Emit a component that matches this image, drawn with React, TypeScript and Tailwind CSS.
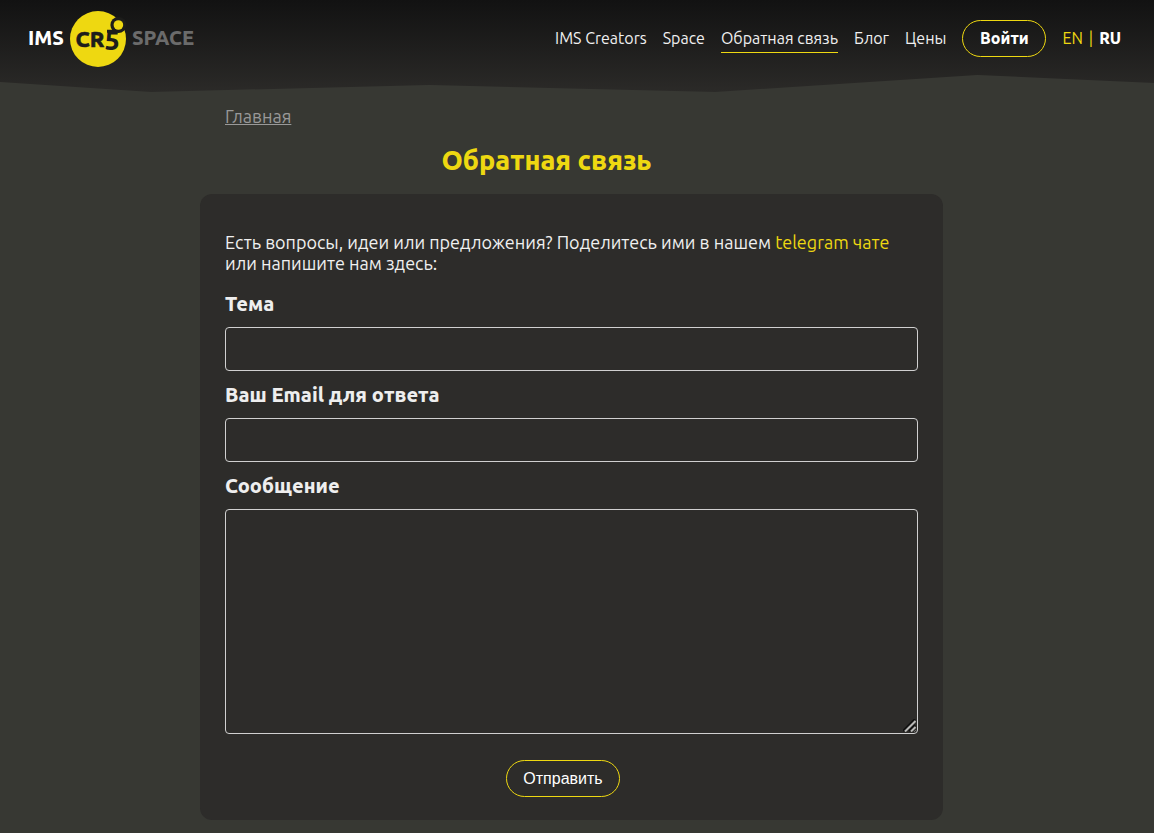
import { FC, FormEvent, useState } from 'react';

interface NavItem {
  title: string;
  href: string;
  active?: boolean;
}

const navItems: NavItem[] = [
  { title: 'IMS Creators', href: '#creators' },
  { title: 'Space', href: '#space' },
  { title: 'Обратная связь', href: '#feedback', active: true },
  { title: 'Блог', href: '#blog' },
  { title: 'Цены', href: '#prices' },
];

const Logo: FC = () => (
  <a href="#home" className="flex items-center gap-[6px] text-xl font-extrabold leading-6">
    <span className="pb-0.5 text-white">IMS</span>
    <svg width="56" height="56" viewBox="0 0 56 56" aria-label="CR5">
      <circle cx="28" cy="28" r="28" fill="#eed811" />
      <circle cx="48.4" cy="14" r="8" fill="#1d1d1b" />
      <circle cx="48.4" cy="14" r="4.8" fill="#eed811" />
      <path d="M37 20.3h5.5l2.5-2" stroke="#1d1d1b" strokeWidth="3" fill="none" />
      <text x="5.5" y="36" fontSize="22" fill="#1d1d1b" stroke="#1d1d1b" strokeWidth="0.5">CR</text>
      <text x="34.5" y="38.5" fontSize="27" fill="#1d1d1b">5</text>
    </svg>
    <span className="pb-0.5 text-[#6b6b6b]">SPACE</span>
  </a>
);

const Header: FC = () => (
  <header className="h-[92px] bg-linear-to-b from-[#121212] to-[#2b2a28] [clip-path:polygon(0_0,100%_0,100%_83px,84.7%_75px,62%_92px,37.2%_85px,13.1%_92px,0_82px)]">
    <div className="flex h-[77px] items-center justify-between pl-7 pr-[33px]">
      <Logo />
      <div className="flex items-center gap-4 text-base leading-6 text-[#f0f0f0]">
        <nav className="flex gap-4">
          {navItems.map((item) => (
            <a
              key={item.href}
              href={item.href}
              className={item.active ? 'border-y border-t-transparent border-b-[#eed811] pb-0.5' : 'border-y border-transparent pb-0.5'}
            >
              {item.title}
            </a>
          ))}
        </nav>
        <button type="button" className="h-[37px] w-[84px] rounded-full border border-[#eed811] pb-0.5 font-extrabold text-white">
          Войти
        </button>
        <div className="flex gap-[6px] pb-0.5 text-[#eed811]">
          <a href="#en">EN</a>
          <span>|</span>
          <a href="#ru" className="font-extrabold text-white">RU</a>
        </div>
      </div>
    </div>
  </header>
);

const fieldClass = 'block w-full rounded-sm border border-[#d0d0d0] bg-transparent px-3 text-white outline-none';
const labelClass = 'my-3 block text-xl font-extrabold leading-[23px] text-[#eeeeee]';

const FeedbackForm: FC = () => {
  const [subject, setSubject] = useState('');
  const [email, setEmail] = useState('');
  const [message, setMessage] = useState('');

  const handleSubmit = (e: FormEvent) => {
    e.preventDefault();
  };

  return (
    <form onSubmit={handleSubmit} className="rounded-[12px] bg-[#2d2c2a] px-[25px] pt-[38px] pb-[23px]">
      <p className="mb-[18px] text-lg leading-[21px] text-[#f0f0f0]">
        Есть вопросы, идеи или предложения? Поделитесь ими в нашем{' '}
        <a href="#telegram" className="text-[#eed811]">telegram чате</a>
        <br />
        или напишите нам здесь:
      </p>
      <label htmlFor="subject" className={labelClass}>Тема</label>
      <input
        id="subject"
        type="text"
        value={subject}
        onChange={(e) => setSubject(e.target.value)}
        className={`${fieldClass} h-11`}
      />
      <label htmlFor="email" className={labelClass}>Ваш Email для ответа</label>
      <input
        id="email"
        type="email"
        value={email}
        onChange={(e) => setEmail(e.target.value)}
        className={`${fieldClass} h-11`}
      />
      <label htmlFor="message" className={labelClass}>Сообщение</label>
      <div className="relative">
        <textarea
          id="message"
          value={message}
          onChange={(e) => setMessage(e.target.value)}
          className={`${fieldClass} h-[225px] resize-y py-2`}
        />
        {/* resize grip, drawn over the native one */}
        <svg
          className="pointer-events-none absolute right-0.5 bottom-0.5"
          width="13"
          height="13"
          viewBox="0 0 13 13"
          fill="none"
          aria-hidden="true"
        >
          <path d="M0 0h13v11l-2 2H0z" fill="#2d2c2a" />
          <path d="M0 12L12 0M6 12L12 6" stroke="#111111" strokeWidth="2" />
          <path d="M2 12.5L12.5 2M8 12.5L12.5 8" stroke="#b8b8b6" strokeWidth="2" />
        </svg>
      </div>
      <div className="mt-[26px] flex justify-center pr-[17px]">
        <button
          type="submit"
          className="h-[37px] w-[114px] rounded-full border border-[#eed811] font-['Liberation_Sans',Arial,sans-serif] text-base text-white"
        >
          Отправить
        </button>
      </div>
    </form>
  );
};

export default function App() {
  return (
    <div className="min-h-screen bg-[#373833] font-['Ubuntu','Noto_Sans',sans-serif]">
      <Header />
      <div className="pr-[11px] pb-[13px]">
        <main className="mx-auto max-w-[743px]">
          <div className="px-[25px] pt-3 text-lg leading-6">
            <a href="#home" className="text-[#999999] underline">Главная</a>
          </div>
          <h1 className="mt-4 mb-[18px] pr-[50px] text-center text-[27px] font-extrabold leading-8 text-[#eed811]">
            Обратная связь
          </h1>
          <FeedbackForm />
        </main>
      </div>
    </div>
  );
}
